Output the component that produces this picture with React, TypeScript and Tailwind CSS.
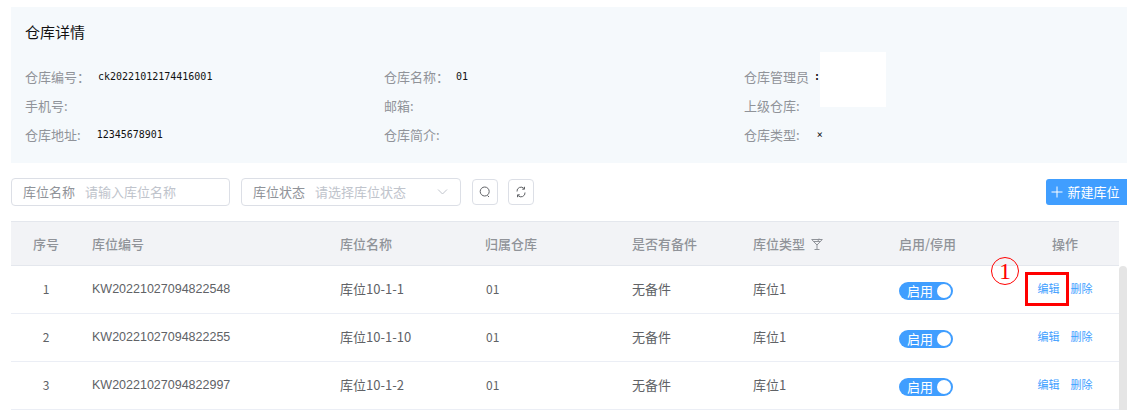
import React from "react";

const cjk = "font-['Noto_Sans_CJK_SC','Noto_Sans',sans-serif]";
const gridCols = "grid grid-cols-[70px_248px_145px_147px_121px_146px_123px_108px]";

function Info({ label, value, valueClass = "" }: { label: string; value?: string; valueClass?: string }) {
  return (
    <div className="flex h-[29px] w-[360px] items-center first:w-[359px]">
      <span className="text-[13px] text-[#909399] whitespace-nowrap">{label}</span>
      {value && (
        <span className={`font-['DejaVu_Sans_Mono',monospace] text-[10px] leading-none text-[#111] whitespace-pre ${valueClass}`}>{value}</span>
      )}
    </div>
  );
}

function Toggle() {
  return (
    <div className="mt-[4px] flex h-[18px] w-[54px] items-center justify-between rounded-full bg-[#409eff] pl-[8px] pr-[2px]">
      <span className="text-[13px] leading-none text-white">启用</span>
      <span className="h-[14px] w-[14px] rounded-full bg-white" />
    </div>
  );
}

function Row({ n, code, name, first }: { n: number; code: string; name: string; first?: boolean }) {
  return (
    <div className={`${gridCols} h-[48px] w-[1108px] items-center border-b border-[#ebeef5] pb-[2px] text-[13px] text-[#606266]`}>
      <div className="text-center text-[12px]">{n}</div>
      <div className="pl-[11px] pt-[2px] font-['Liberation_Sans',sans-serif] text-[12.5px]">{code}</div>
      <div className="pl-[11px]">{name}</div>
      <div className="pl-[12px] text-[12px]">01</div>
      <div className="pl-[11px]">无备件</div>
      <div className="pl-[11px]">库位1</div>
      <div className="pl-[11px]">
        <Toggle />
      </div>
      <div className="relative flex justify-center gap-[11px] text-[11px] text-[#409eff]">
        <span>编辑</span>
        <span>删除</span>
        {first && (
          <>
            <span className="absolute left-[14px] top-[-8px] h-[34px] w-[44px] border-[3px] border-[#ff0000]" />
            <span className="absolute left-[-20px] top-[-23px] flex h-[28px] w-[28px] items-center justify-center rounded-full border border-[#ff0000] font-['Liberation_Serif',serif] text-[24px] leading-none text-[#ff0000]">
              1
            </span>
          </>
        )}
      </div>
    </div>
  );
}

export default function App() {
  return (
    <div className={`${cjk} relative h-[410px] w-[1127px] overflow-hidden bg-white pl-[11px] pt-[7px]`}>
      <section className="relative h-[156px] w-[1116px] bg-[#f5f9fc] pl-[14px] pt-[15px]">
        <h2 className="text-[15px] font-normal leading-[20px] text-[#111]">仓库详情</h2>
        <div className="mt-[20px] flex">
          <Info label="仓库编号：" value="ck20221012174416001" valueClass="ml-[8px]" />
          <Info label="仓库名称：" value="01" valueClass="ml-[7px]" />
          <Info label="仓库管理员" value=":1" valueClass="ml-[5px] font-bold" />
        </div>
        <div className="flex">
          <Info label="手机号:" />
          <Info label="邮箱:" />
          <Info label="上级仓库:" />
        </div>
        <div className="flex">
          <Info label="仓库地址:" value="12345678901" valueClass="ml-[16px]" />
          <Info label="仓库简介:" />
          <Info label="仓库类型:" value="×" valueClass="ml-[17px]" />
        </div>
        <div className="absolute left-[809px] top-[45px] h-[55px] w-[66px] bg-white" />
      </section>

      <div className="mt-[15px] flex h-[28px] items-center pr-0">
        <div className="flex h-[28px] w-[219px] items-center rounded-[4px] border border-[#dcdfe6] pl-[11px] text-[13px]">
          <span className="text-[#909399]">库位名称</span>
          <span className="ml-[10px] text-[#c0c4cc]">请输入库位名称</span>
        </div>
        <div className="ml-[11px] flex h-[28px] w-[220px] items-center rounded-[4px] border border-[#dcdfe6] pl-[11px] text-[13px]">
          <span className="text-[#909399]">库位状态</span>
          <span className="ml-[10px] text-[#c0c4cc]">请选择库位状态</span>
          <svg className="ml-[31px]" width="11" height="6" viewBox="0 0 11 6" fill="none" stroke="#c0c4cc" strokeWidth="1">
            <path d="M1 .5l4.5 4.5L10 .5" />
          </svg>
        </div>
        <button className="ml-[11px] flex h-[26px] w-[26px] items-center justify-center rounded-[4px] border border-[#dcdfe6] bg-white">
          <svg width="12" height="12" viewBox="0 0 12 12" fill="none" stroke="#606266" strokeWidth="1">
            <circle cx="5.7" cy="5.5" r="4.5" />
            <path d="M8.5 9.5l1.5 1.5" />
          </svg>
        </button>
        <button className="ml-[10px] flex h-[26px] w-[26px] items-center justify-center rounded-[4px] border border-[#dcdfe6] bg-white">
          <svg width="12" height="12" viewBox="0 0 12 12" fill="none" stroke="#606266" strokeWidth="1">
            <path d="M2 5.5A4 4 0 0 1 9 2.5M10 6.5A4 4 0 0 1 3 9.5" />
            <path d="M9.5 .8v2.4H7.2M2.5 11.2V8.8h2.3" />
          </svg>
        </button>
        <button className="ml-auto flex h-[26px] w-[81px] items-center justify-center gap-[4px] rounded-l-[3px] bg-[#409eff] pr-[2px] text-[13px] text-white">
          <svg width="12" height="12" viewBox="0 0 12 12" fill="none" stroke="#fff" strokeWidth="1">
            <path d="M6 .5v11M.5 6h11" />
          </svg>
          新建库位
        </button>
      </div>

      <div className="relative mt-[15px]">
        <div className={`${gridCols} h-[45px] w-[1108px] items-center border-y border-[#e4e7ed] bg-[#f2f3f6] text-[13px] font-medium text-[#909399]`}>
          <div className="text-center">序号</div>
          <div className="pl-[11px]">库位编号</div>
          <div className="pl-[11px]">库位名称</div>
          <div className="pl-[11px]">归属仓库</div>
          <div className="pl-[11px]">是否有备件</div>
          <div className="flex items-center gap-[6px] pl-[11px]">
            库位类型
            <svg width="12" height="12" viewBox="0 0 12 12" fill="none" stroke="#909399" strokeWidth="1">
              <path d="M.7 1.5h10.6L6 7zM6 7v4M3.5 11.5h5M2.5 3.5h7M8 .5L7 3" />
            </svg>
          </div>
          <div className="pl-[11px]">启用/停用</div>
          <div className="text-center">操作</div>
        </div>
        <Row n={1} code="KW20221027094822548" name="库位10-1-1" first />
        <Row n={2} code="KW20221027094822255" name="库位10-1-10" />
        <Row n={3} code="KW20221027094822997" name="库位10-1-2" />
        <div className="absolute left-[1108px] top-[45px] h-[200px] w-[8px] rounded-t-[4px] bg-[#e5e5e5]" />
      </div>
    </div>
  );
}
